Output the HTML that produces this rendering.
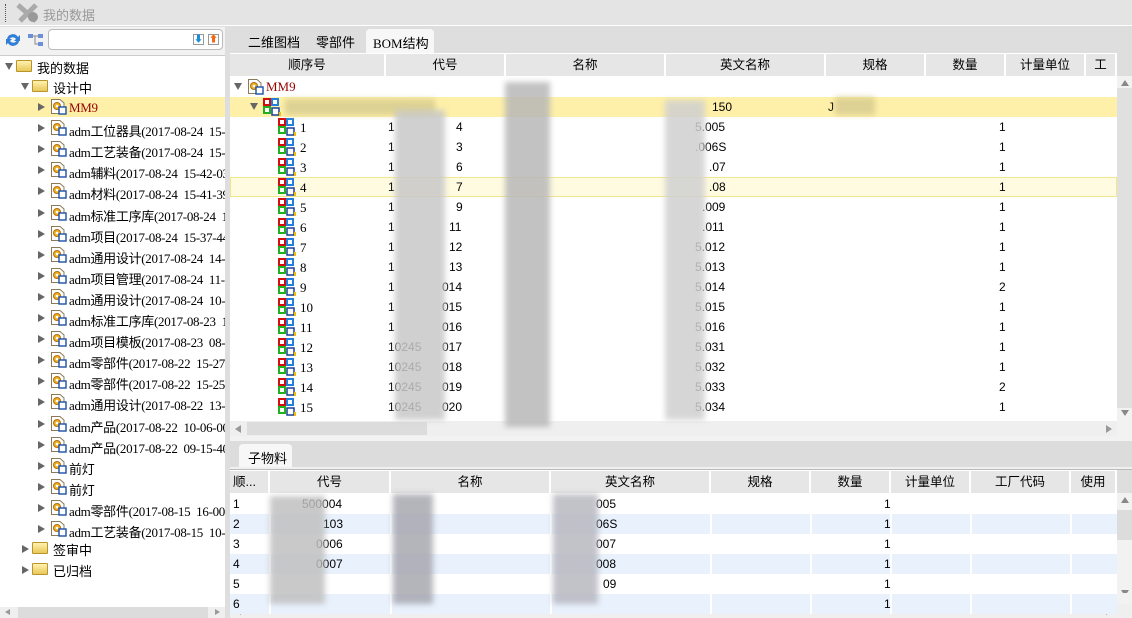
<!DOCTYPE html>
<html><head><meta charset="utf-8">
<style>
*{box-sizing:border-box;margin:0;padding:0}
body{width:1132px;height:618px;overflow:hidden;background:#dedede;font-family:"Liberation Sans","Noto Sans CJK SC",sans-serif;font-size:12px;color:#000;position:relative}
.a{position:absolute;white-space:nowrap}
.serif{font-family:"Liberation Serif","Noto Sans CJK SC",serif;font-size:13px}
.hd{position:absolute;background:#e6e6e6;text-align:center;line-height:22px;border-right:2px solid #fff;font-size:12.5px}
.blur{position:absolute;background:#c8c8c8;filter:blur(3px);opacity:.85}
.tri{position:absolute;width:0;height:0}
.rt{border-top:4px solid transparent;border-bottom:4px solid transparent;border-left:7px solid #666}
.dn{border-left:4px solid transparent;border-right:4px solid transparent;border-top:7px solid #666}
.fold{position:absolute;width:16px;height:12px;background:linear-gradient(#fff2b0,#e9c75a);border:1px solid #b8952a;border-radius:1px}
</style></head><body>
<div class="a" style="left:0;top:0;width:1132px;height:26px;background:#e4e4e4;border-bottom:1px solid #fff"></div>
<div class="a" style="left:5px;top:4px;width:1px;height:18px;border-left:1px dotted #555"></div>
<svg class="a" style="left:16px;top:3px" width="24" height="20"><path d="M2 2 L20 18 M20 2 L4 18" stroke="#aaa" stroke-width="5"/><circle cx="17" cy="14" r="5" fill="#999"/></svg>
<div class="a" style="left:43px;top:5px;color:#999;font-size:13px">我的数据</div>

<div class="a" style="left:0;top:27px;width:225px;height:591px;background:#f2f2f2"></div>
<svg class="a" style="left:4px;top:32px" width="18" height="16"><path d="M3 7 A6 6 0 0 1 14 5 L16 3 L16 9 L10 9 L12 7 A4 4 0 0 0 5 8Z" fill="#2f7fd8"/><path d="M15 9 A6 6 0 0 1 4 11 L2 13 L2 7 L8 7 L6 9 A4 4 0 0 0 13 8Z" fill="#2f7fd8"/></svg>
<svg class="a" style="left:27px;top:31px" width="18" height="18"><rect x="1" y="3" width="5" height="4" fill="#6b8fd6"/><rect x="11" y="3" width="5" height="4" fill="#6b8fd6"/><rect x="11" y="11" width="5" height="4" fill="#6b8fd6"/><path d="M6 5 H11 M8 5 V13 H11" stroke="#888" fill="none"/></svg>
<div class="a" style="left:48px;top:29px;width:175px;height:21px;background:#fff;border:1px solid #bbb;border-radius:4px"></div>
<div class="a" style="left:193px;top:34px;width:11px;height:11px;border:1px solid #999;background:#fff;color:#1a8fd8;font-size:9px;line-height:9px;text-align:center">⬇</div>
<div class="a" style="left:208px;top:34px;width:11px;height:11px;border:1px solid #999;background:#fff;color:#f26a10;font-size:9px;line-height:9px;text-align:center">⬆</div>
<div class="a" style="left:0;top:55px;width:225px;height:552px;background:#fff;border-top:1px solid #ccc"></div>
<div class="a" style="left:0;top:97px;width:225px;height:20px;background:#fef0a8"></div>
<div class="a" style="left:0;top:607px;width:225px;height:11px;background:#efefef"></div>
<div class="a" style="left:18px;top:607px;width:190px;height:11px;background:#dcdcdc"></div>
<div class="tri" style="left:5px;top:609px;border-top:3px solid transparent;border-bottom:3px solid transparent;border-right:5px solid #999"></div>
<div class="tri" style="left:215px;top:609px;border-top:3px solid transparent;border-bottom:3px solid transparent;border-left:5px solid #999"></div>

<div class="a" style="left:230px;top:27px;width:902px;height:26px;background:#dedede"></div>
<div class="a" style="left:248px;top:32px;font-size:13px">二维图档</div>
<div class="a" style="left:316px;top:32px;font-size:13px">零部件</div>
<div class="a" style="left:366px;top:29px;width:68px;height:24px;background:#f7f7f7;border-radius:4px 4px 0 0"></div>
<div class="a serif" style="left:373px;top:33px">BOM结构</div>
<div class="a" style="left:230px;top:53px;width:887px;height:368px;background:#fff"></div>
<div class="a" style="left:230px;top:97px;width:887px;height:20px;background:#fef0a8"></div>
<div class="a" style="left:230px;top:177px;width:887px;height:20px;background:#fffbe0;border:1px solid #f4e68c"></div>
<div class="a" style="left:1117px;top:76px;width:15px;height:345px;background:#f2f2f2"></div>
<div class="a" style="left:1117px;top:88px;width:15px;height:320px;background:#e0e0e0"></div>
<div class="tri" style="left:1121px;top:80px;border-left:4px solid transparent;border-right:4px solid transparent;border-bottom:6px solid #888"></div>
<div class="tri" style="left:1121px;top:410px;border-left:4px solid transparent;border-right:4px solid transparent;border-top:6px solid #888"></div>
<div class="a" style="left:230px;top:421px;width:887px;height:15px;background:#efefef"></div>
<div class="a" style="left:247px;top:422px;width:180px;height:13px;background:#dcdcdc"></div>
<div class="tri" style="left:235px;top:425px;border-top:4px solid transparent;border-bottom:4px solid transparent;border-right:6px solid #999"></div>
<div class="tri" style="left:1106px;top:425px;border-top:4px solid transparent;border-bottom:4px solid transparent;border-left:6px solid #999"></div>
<div class="a" style="left:1117px;top:421px;width:15px;height:15px;background:#f2f2f2"></div>
<div class="a" style="left:230px;top:436px;width:902px;height:5px;background:#f2f2f2"></div>

<div class="a" style="left:230px;top:441px;width:902px;height:26px;background:#dcdcdc"></div>
<div class="a" style="left:239px;top:444px;width:53px;height:24px;background:#f7f7f7;border-radius:4px 4px 0 0"></div>
<div class="a" style="left:248px;top:448px;font-size:13px">子物料</div>
<div class="a" style="left:230px;top:467px;width:902px;height:3px;background:#f0f0f0;border-bottom:1px solid #bbb"></div>
<div class="a" style="left:230px;top:470px;width:887px;height:134px;background:#fff"></div>
<div class="a" style="left:1117px;top:493px;width:15px;height:111px;background:#f2f2f2"></div>
<div class="a" style="left:1117px;top:510px;width:15px;height:30px;background:#dcdcdc"></div>
<div class="tri" style="left:1121px;top:497px;border-left:4px solid transparent;border-right:4px solid transparent;border-bottom:6px solid #888"></div>
<div class="tri" style="left:1121px;top:590px;border-left:4px solid transparent;border-right:4px solid transparent;border-top:6px solid #888"></div>
<div class="a" style="left:230px;top:604px;width:902px;height:14px;background:#efefef"></div>
<div class="tri" style="left:235px;top:607px;border-top:4px solid transparent;border-bottom:4px solid transparent;border-right:6px solid #999"></div>
<div class="tri" style="left:1106px;top:607px;border-top:4px solid transparent;border-bottom:4px solid transparent;border-left:6px solid #999"></div>
<div class="a" style="left:225px;top:27px;width:5px;height:591px;background:#dedede"></div>

<script>
function H(s){document.body.insertAdjacentHTML('beforeend',s)}
function docIcon(x,y){return '<svg class="a" style="left:'+x+'px;top:'+y+'px" width="17" height="17"><path d="M1.5 1.5H10L14 5V15.5H1.5Z" fill="#fff" stroke="#8a7a5a"/><circle cx="7" cy="8" r="3.5" fill="#f0b020" stroke="#b07010"/><circle cx="7" cy="8" r="1.3" fill="#fff"/><rect x="9" y="9" width="7" height="7" fill="#fff" stroke="#1d4fa8" stroke-width="1.4"/></svg>'}
function bomIcon(x,y){return '<svg class="a" style="left:'+x+'px;top:'+y+'px" width="18" height="18"><rect x="1" y="1" width="6" height="6" fill="#fff" stroke="#d01010" stroke-width="2"/><rect x="9" y="1" width="6" height="6" fill="#fff" stroke="#2080e0" stroke-width="2"/><rect x="1" y="9" width="6" height="6" fill="#fff" stroke="#20b020" stroke-width="2"/><rect x="9" y="10" width="7" height="7" fill="#fff" stroke="#1d3f98" stroke-width="1.5"/><rect x="16" y="14" width="2" height="4" fill="#f0c000"/></svg>'}
H('<div class="tri dn" style="left:5px;top:63px"></div><div class="fold" style="left:16px;top:60px"></div><div class="a" style="left:37px;top:58px;font-size:13px">我的数据</div>');
H('<div class="tri dn" style="left:21px;top:83px"></div><div class="fold" style="left:32px;top:80px"></div><div class="a" style="left:53px;top:78px;font-size:13px">设计中</div>');
var items=["MM9","adm工位器具(2017-08-24&nbsp; 15-4","adm工艺装备(2017-08-24&nbsp; 15-4","adm辅料(2017-08-24&nbsp; 15-42-03","adm材料(2017-08-24&nbsp; 15-41-39","adm标准工序库(2017-08-24&nbsp; 15","adm项目(2017-08-24&nbsp; 15-37-44","adm通用设计(2017-08-24&nbsp; 14-3","adm项目管理(2017-08-24&nbsp; 11-0","adm通用设计(2017-08-24&nbsp; 10-4","adm标准工序库(2017-08-23&nbsp; 16","adm项目模板(2017-08-23&nbsp; 08-2","adm零部件(2017-08-22&nbsp; 15-27-","adm零部件(2017-08-22&nbsp; 15-25-","adm通用设计(2017-08-22&nbsp; 13-3","adm产品(2017-08-22&nbsp; 10-06-00","adm产品(2017-08-22&nbsp; 09-15-40","前灯","前灯","adm零部件(2017-08-15&nbsp; 16-00-","adm工艺装备(2017-08-15&nbsp; 10-3"];
items.forEach(function(t,i){var y=Math.round(97+i*21.1);H('<div class="tri rt" style="left:38px;top:'+(y+6)+'px"></div>'+docIcon(50,y+1)+'<div class="a serif" style="left:69px;top:'+(y+3)+'px;width:156px;overflow:hidden;letter-spacing:-0.3px;'+(i==0?'color:#900':'')+'">'+t+'</div>')});
H('<div class="tri rt" style="left:22px;top:545px"></div><div class="fold" style="left:32px;top:542px"></div><div class="a" style="left:53px;top:540px;font-size:13px">签审中</div>');
H('<div class="tri rt" style="left:22px;top:566px"></div><div class="fold" style="left:32px;top:563px"></div><div class="a" style="left:53px;top:561px;font-size:13px">已归档</div>');
var c1=[[230,386,"顺序号"],[386,506,"代号"],[506,666,"名称"],[666,826,"英文名称"],[826,926,"规格"],[926,1006,"数量"],[1006,1086,"计量单位"],[1086,1117,"工"]];
c1.forEach(function(c){H('<div class="hd" style="left:'+c[0]+'px;top:54px;width:'+(c[1]-c[0])+'px;height:22px">'+c[2]+'</div>')});
H('<div class="tri dn" style="left:234px;top:83px"></div>'+docIcon(247,78)+'<div class="a serif" style="left:266px;top:79px;color:#900">MM9</div>');
H('<div class="tri dn" style="left:250px;top:103px"></div>'+bomIcon(263,98));
var q=[1,1,1,1,1,1,1,1,2,1,1,1,1,2,1];
var cs=["4","3","6","7","9","11","12","13","014","015","016","017","018","019","020"];
var es=["5.005",".006S",".07",".08",".009",".011","5.012","5.013","5.014","5.015","5.016","5.031","5.032","5.033","5.034"];
for(var i=0;i<15;i++){var y=117+i*20;
H(bomIcon(278,y+1)+'<div class="a serif" style="left:300px;top:'+(y+3)+'px">'+(i+1)+'</div>');
H('<div class="a" style="left:388px;top:'+(y+3)+'px">'+(i>=11?'10245':'1')+'</div><div class="a" style="left:'+(463-cs[i].length*7)+'px;top:'+(y+3)+'px">'+cs[i]+'</div><div class="a" style="left:'+(730-es[i].length*7)+'px;top:'+(y+3)+'px">'+es[i]+'</div><div class="a" style="left:999px;top:'+(y+3)+'px">'+q[i]+'</div>')}
H('<div class="a" style="left:712px;top:100px">150</div><div class="a" style="left:828px;top:100px">J</div>');
H('<div class="blur" style="left:285px;top:99px;width:150px;height:16px;background:#d8cc90"></div>');
H('<div class="blur" style="left:395px;top:110px;width:50px;height:310px"></div>');
H('<div class="blur" style="left:505px;top:82px;width:45px;height:345px;background:#b8b8b8"></div>');
H('<div class="blur" style="left:665px;top:100px;width:40px;height:320px;background:#d0d0d0"></div>');
H('<div class="blur" style="left:835px;top:97px;width:40px;height:18px;background:#d8cc90"></div>');
var c2=[[230,270,"顺..."],[270,391,"代号"],[391,551,"名称"],[551,711,"英文名称"],[711,811,"规格"],[811,891,"数量"],[891,971,"计量单位"],[971,1071,"工厂代码"],[1071,1117,"使用"]];
c2.forEach(function(c){H('<div class="hd" style="left:'+c[0]+'px;top:471px;width:'+(c[1]-c[0])+'px;height:22px;'+(c[2]=='顺...'?'text-align:left;padding-left:3px':'')+'">'+c[2]+'</div>')});
var b2=["500004","103","0006","0007","",""],e2=["005","06S","007","008","09",""];
for(var i=0;i<6;i++){var y=494+i*20;var bg=i%2?'#e8f1fc':'#fff';
H('<div class="a" style="left:230px;top:'+y+'px;width:887px;height:20px;background:'+bg+'"></div>');
c2.slice(0,-1).forEach(function(c){H('<div class="a" style="left:'+(c[1]-1)+'px;top:'+y+'px;width:2px;height:20px;background:#fff"></div>')});
H('<div class="a" style="left:233px;top:'+(y+3)+'px">'+(i+1)+'</div><div class="a" style="left:'+(344-b2[i].length*7)+'px;top:'+(y+3)+'px">'+b2[i]+'</div><div class="a" style="left:'+(617-e2[i].length*7)+'px;top:'+(y+3)+'px">'+e2[i]+'</div><div class="a" style="left:884px;top:'+(y+3)+'px">1</div>')}
H('<div class="blur" style="left:270px;top:496px;width:55px;height:108px;background:#c0c0c0"></div>');
H('<div class="blur" style="left:393px;top:494px;width:40px;height:110px;background:#a8a8b0"></div>');
H('<div class="blur" style="left:553px;top:494px;width:45px;height:110px;background:#b8b8c0"></div>');
H('<div class="a" style="left:1117px;top:593px;width:15px;height:11px;background:#f2f2f2"></div>');
</script>
</body></html>
